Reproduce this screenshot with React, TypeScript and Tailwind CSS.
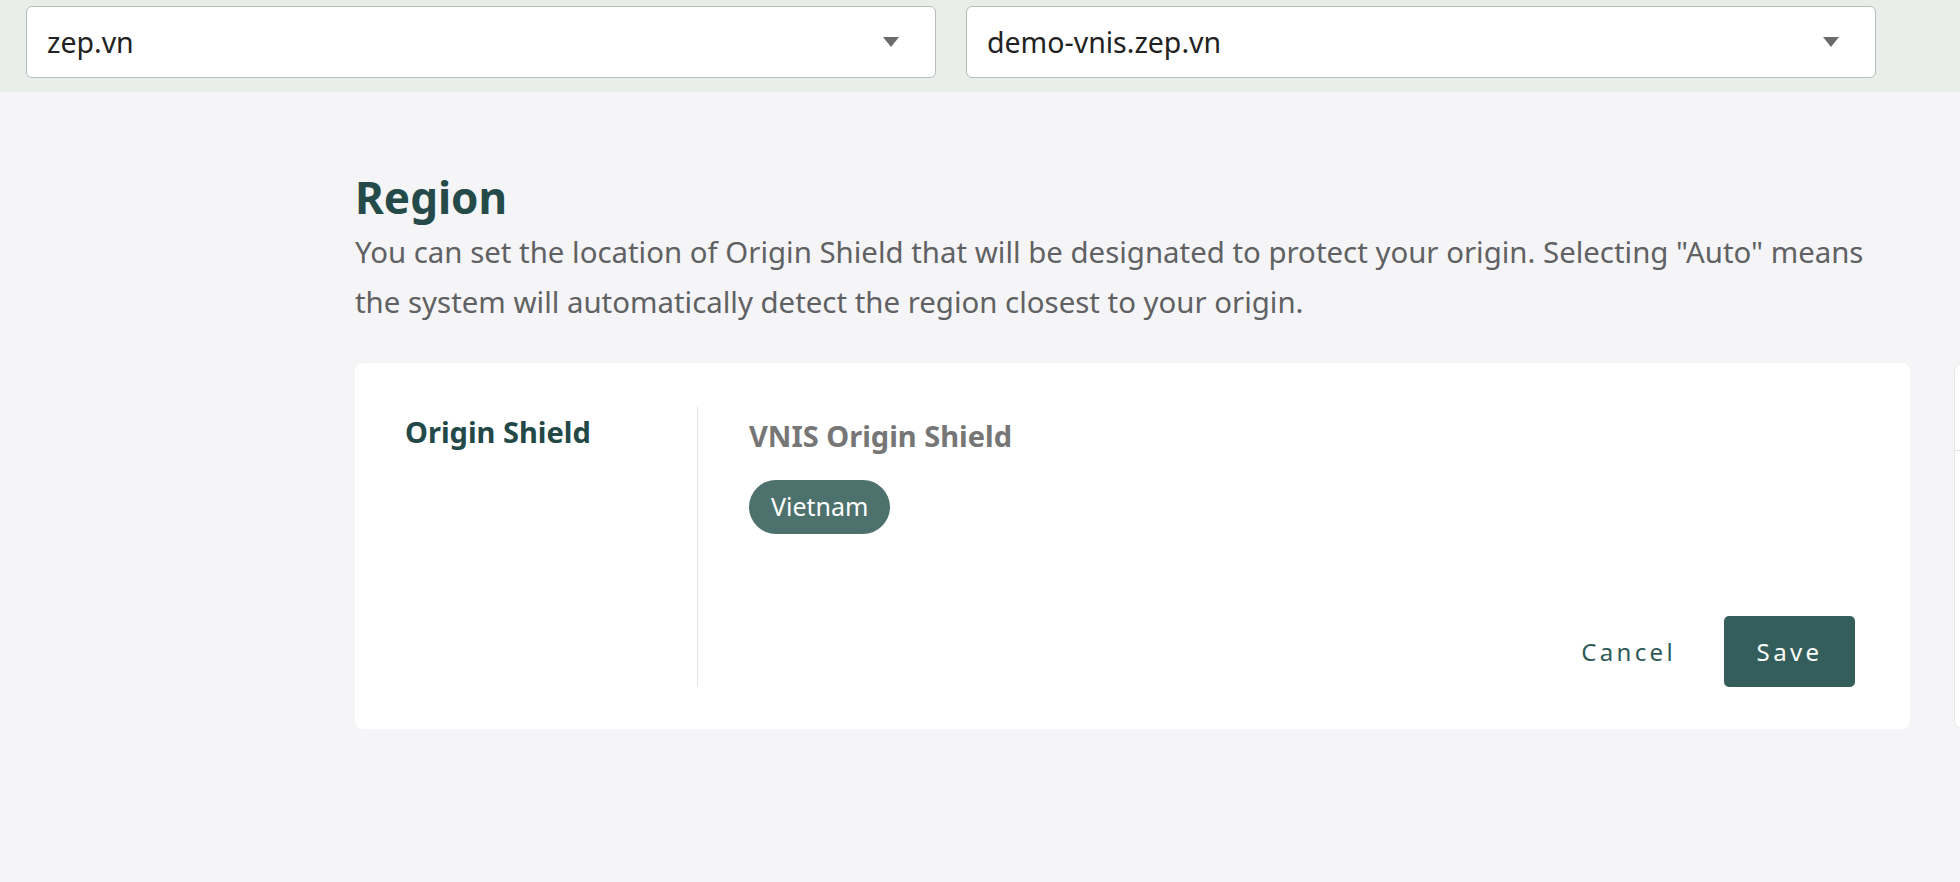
import { useState } from "react"

const domains = ["zep.vn", "demo-vnis.zep.vn"]

function Select({ value }: { value: string }) {
  return (
    <div className="w-[910px] h-[72px] bg-white border border-[#b7bdb9] rounded-[6px] flex items-center justify-between pl-[20px] pr-[36px]">
      <span className="text-[28.5px] text-[#222]">{value}</span>
      <svg width="16" height="10" viewBox="0 0 16 10">
        <path d="M0 0h16L8 10z" fill="#6b6b6b" />
      </svg>
    </div>
  )
}

export default function App() {
  const [region] = useState("Vietnam")

  return (
    <div className="w-[1960px] h-[882px] overflow-hidden flex flex-col bg-[#f5f5f7] font-['Noto_Sans',sans-serif]">
      {/* Domain pickers */}
      <div className="h-[92px] shrink-0 bg-[#e9eeeb] flex gap-[30px] pl-[26px] pt-[6px]">
        {domains.map((d) => (
          <Select key={d} value={d} />
        ))}
      </div>

      {/* Content */}
      <div className="flex-1 pl-[355px] pt-[75px]">
        <h1 className="text-[44px] leading-[60px] font-bold text-[#244a49]">Region</h1>
        <p className="w-[1540px] text-[29.4px] leading-[50px] text-[#5f6163]">
          You can set the location of Origin Shield that will be designated to protect your origin. Selecting "Auto" means the system will automatically detect the region closest to your origin.
        </p>

        <div className="mt-[36px] flex gap-[44px]">
          <div className="w-[1555px] h-[366px] shrink-0 bg-white rounded-[8px] flex pt-[44px] pb-[42px]">
            <div className="w-[343px] shrink-0 border-r border-[#e4e4e4] pl-[50px] pt-[7px]">
              <div className="text-[29px] leading-[36px] font-bold text-[#234848]">Origin Shield</div>
            </div>
            <div className="flex-1 flex flex-col pl-[51px] pr-[55px] pt-[11px]">
              <div className="text-[29px] leading-[36px] font-bold text-[#767676]">VNIS Origin Shield</div>
              <div className="mt-[26px]">
                <span className="inline-flex items-center h-[54px] px-[22px] rounded-full bg-[#4d716d] text-white text-[25px]">
                  {region}
                </span>
              </div>
              <div className="mt-auto flex justify-end items-center gap-[48px]">
                <button className="text-[24px] tracking-[0.14em] text-[#2f5a57]">Cancel</button>
                <button className="w-[131px] h-[71px] rounded-[5px] bg-[#345e5b] text-white text-[24px] tracking-[0.14em]">
                  Save
                </button>
              </div>
            </div>
          </div>

          {/* Next panel, mostly off screen */}
          <div className="w-[400px] h-[366px] shrink-0 bg-white rounded-[8px] border border-[#e6e6e6]">
            <div className="h-[87px] border-b border-[#e0e0e0]" />
          </div>
        </div>
      </div>
    </div>
  )
}
